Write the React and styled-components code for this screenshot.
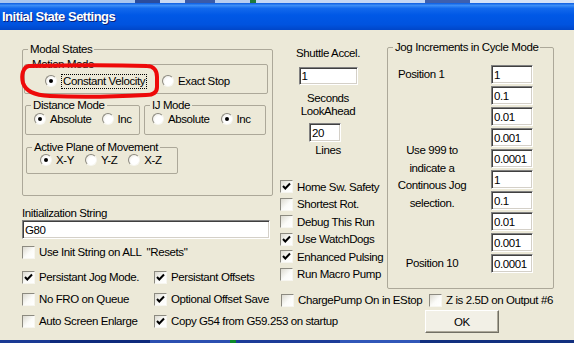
import React from 'react'
import styled, { createGlobalStyle } from 'styled-components'

const GlobalStyle = createGlobalStyle`
  html, body { margin: 0; padding: 0; }
  body {
    width: 574px;
    height: 343px;
    overflow: hidden;
    background: #ece9d8;
    font-family: "Liberation Sans", Arial, sans-serif;
    font-size: 11.5px;
    letter-spacing: -0.4px;
    color: #000;
  }
`

const Window = styled.div`
  position: relative;
  width: 574px;
  height: 343px;
  display: flex;
  flex-direction: column;
  overflow: hidden;
`
const TopStrip = styled.div`
  height: 3px;
  background: linear-gradient(90deg, #a9c6ef 0 135px, #2b4c9c 135px 160px, #c9d9f3 160px 185px, #3a5aa8 185px 215px, #b7cdf0 215px 250px, #1f7a3a 250px 256px, #c5d8f5 256px 425px, #3d5fae 425px 470px, #d5e2f7 470px);
`
const TitleBar = styled.div`
  height: 27px;
  display: flex;
  align-items: center;
  padding-left: 2px;
  background: linear-gradient(180deg, #0b5be0 0%, #3c8ef6 9%, #1269ec 20%, #0058e6 45%, #0053df 80%, #0046c8 100%);
  color: #fff;
  font-weight: bold;
  font-size: 13px;
  letter-spacing: -0.5px;
  text-shadow: 1px 1px 0 #0a1f78;
`
const BottomStrip = styled.div`
  height: 3px;
  background: linear-gradient(90deg, #1a3a94 0 50px, #0f2a7c 50px 150px, #2b4fb0 150px 230px, #0d8a2a 230px 236px, #1c3c98 236px 340px, #3157b8 340px 420px, #12307f 420px);
`
const Body = styled.div`
  flex: 1;
  display: flex;
  padding: 10px 0 0 22px;
  background: #ece9d8;
`
const LeftCol = styled.div`
  width: 251px;
  padding-top: 2px;
  display: flex;
  flex-direction: column;
`
const RightPart = styled.div`
  margin-left: 8px;
  width: 273px;
  display: flex;
  flex-direction: column;
`
const TopRow = styled.div`
  display: flex;
  gap: 12px;
`
const Group = styled.fieldset`
  box-sizing: border-box;
  margin: ${p => p.$m || '0'};
  padding: 0;
  border: 1px solid #aca899;
  border-radius: 2px;
  min-inline-size: 0;
  width: ${p => p.$w}px;
  height: ${p => p.$h}px;
`
const Legend = styled.legend`
  margin-left: 5px;
  padding: 0 2px;
  line-height: 14px;
`
const GroupPair = styled.div`
  display: flex;
  margin: 4px 0 0 2px;
  gap: 4px;
`
const RadioRow = styled.div`
  display: flex;
  align-items: center;
  height: ${p => p.$h}px;
  padding-left: ${p => p.$pl}px;
  gap: ${p => p.$gap}px;
`
const Option = styled.label`
  display: flex;
  align-items: center;
  gap: 4px;
  white-space: nowrap;
`
const RadioBox = styled.span`
  box-sizing: border-box;
  width: 12px;
  height: 12px;
  flex: none;
  border-radius: 50%;
  border: 1px solid;
  border-color: #8c8a80 #f7f6f0 #f7f6f0 #8c8a80;
  background: radial-gradient(circle at 65% 65%, #ffffff 45%, #e4e2d8 100%);
  display: flex;
  align-items: center;
  justify-content: center;
  &::after {
    content: '';
    width: 4px;
    height: 4px;
    border-radius: 50%;
    background: ${p => (p.$on ? '#000' : 'transparent')};
  }
`
const Focus = styled.span`
  padding: 0 1px;
  border: 1px dotted #000;
  line-height: 13px;
`
const CheckBox = styled.span`
  box-sizing: border-box;
  width: 13px;
  height: 13px;
  flex: none;
  border: 1px solid;
  border-color: #8c8a80 #f7f6f0 #f7f6f0 #8c8a80;
  background: linear-gradient(135deg, #dcdad0 0%, #fbfbf8 55%, #ffffff 100%);
  display: flex;
  align-items: center;
  justify-content: center;
`
const CheckItem = styled.label`
  display: flex;
  align-items: center;
  gap: 4px;
  height: ${p => p.$h || 16}px;
  width: ${p => (p.$w ? `${p.$w}px` : 'auto')};
  white-space: pre;
  flex: none;
`
const Text = styled.div`
  line-height: ${p => p.$lh || 14}px;
  margin-top: ${p => p.$mt || 0}px;
  text-align: ${p => p.$align || 'left'};
  padding-left: ${p => p.$pl || 0}px;
  padding-right: ${p => p.$pr || 0}px;
`
const Field = styled.input`
  box-sizing: border-box;
  display: block;
  width: ${p => p.$w}px;
  height: ${p => p.$h || 19}px;
  margin: ${p => p.$m || '0'};
  padding: 0 2px;
  border: 1px solid;
  border-color: #808080 #ffffff #ffffff #808080;
  box-shadow: inset 1px 1px 0 #404040, inset -1px -1px 0 #d4d0c8;
  background: #fff;
  font: inherit;
  letter-spacing: inherit;
  color: #000;
  outline: none;
`
const OptionGrid = styled.div`
  display: grid;
  grid-template-columns: 132px auto;
  grid-auto-rows: 22px;
  margin-top: 6px;
  align-items: center;
`
const MiddleCol = styled.div`
  width: 94px;
  padding-top: 6px;
  display: flex;
  flex-direction: column;
  align-items: center;
`
const CheckList = styled.div`
  align-self: stretch;
  margin: 21px 0 0 -1px;
  display: flex;
  flex-direction: column;
`
const JogBody = styled.div`
  display: flex;
  height: 233px;
`
const JogLabels = styled.div`
  width: 103px;
  display: flex;
  flex-direction: column;
  padding: 11px 0 14px;
  box-sizing: border-box;
`
const Note = styled.div`
  margin-top: 58px;
  padding-right: 15px;
  text-align: center;
  line-height: 17.7px;
`
const JogInputs = styled.div`
  display: flex;
  flex-direction: column;
  gap: 2px;
  padding-top: 11px;
`
const BottomRow = styled.div`
  display: flex;
  margin-top: 3px;
`
const OkButton = styled.button`
  box-sizing: border-box;
  width: 74px;
  height: 23px;
  margin: 2px 0 0 144px;
  border: 1px solid;
  border-color: #ffffff #716f64 #716f64 #ffffff;
  box-shadow: inset -1px -1px 0 #aca899;
  background: #f2f0e6;
  font: inherit;
  letter-spacing: inherit;
  color: #000;
  padding: 0;
`
const Mark = styled.svg`
  position: absolute;
  left: 20px;
  top: 63px;
  pointer-events: none;
`

function Radio({ on, children }) {
  return (
    <Option>
      <RadioBox $on={on} />
      {children}
    </Option>
  )
}

function Check({ on, children, h, w }) {
  return (
    <CheckItem $h={h} $w={w}>
      <CheckBox>
        {on && (
          <svg width="9" height="9" viewBox="0 0 9 9">
            <polyline points="1,4 3.3,6.5 8,1.5" fill="none" stroke="#000" strokeWidth="2" />
          </svg>
        )}
      </CheckBox>
      {children}
    </CheckItem>
  )
}

const jogValues = ['1', '0.1', '0.01', '0.001', '0.0001', '1', '0.1', '0.01', '0.001', '0.0001']

const middleChecks = [
  ['Home Sw. Safety', true],
  ['Shortest Rot.', false],
  ['Debug This Run', false],
  ['Use WatchDogs', true],
  ['Enhanced Pulsing', true],
  ['Run Macro Pump', false],
]

export default function App() {
  return (
    <Window>
      <GlobalStyle />
      <TopStrip />
      <TitleBar>Initial State Settings</TitleBar>
      <Body>
        <LeftCol>
          <Group $w={251} $h={154}>
            <Legend>Modal States</Legend>
            <Group $w={244} $h={37} $m="1px 0 0 1px">
              <Legend>Motion Mode</Legend>
              <RadioRow $h={20} $pl={20} $gap={15}>
                <Radio on><Focus>Constant Velocity</Focus></Radio>
                <Radio>Exact Stop</Radio>
              </RadioRow>
            </Group>
            <GroupPair>
              <Group $w={115} $h={37}>
                <Legend>Distance Mode</Legend>
                <RadioRow $h={14} $pl={8} $gap={10}>
                  <Radio on>Absolute</Radio>
                  <Radio>Inc</Radio>
                </RadioRow>
              </Group>
              <Group $w={122} $h={37}>
                <Legend>IJ Mode</Legend>
                <RadioRow $h={14} $pl={7} $gap={11}>
                  <Radio>Absolute</Radio>
                  <Radio on>Inc</Radio>
                </RadioRow>
              </Group>
            </GroupPair>
            <Group $w={152} $h={34} $m="5px 0 0 3px">
              <Legend>Active Plane of Movement</Legend>
              <RadioRow $h={12} $pl={13} $gap={11}>
                <Radio on>X-Y</Radio>
                <Radio>Y-Z</Radio>
                <Radio>X-Z</Radio>
              </RadioRow>
            </Group>
          </Group>
          <Text $mt={10}>Initialization String</Text>
          <Field $w={248} defaultValue="G80" readOnly />
          <div style={{ marginTop: 5 }}>
            <Check>{'Use Init String on ALL  "Resets"'}</Check>
          </div>
          <OptionGrid>
            <Check on>Persistant Jog Mode.</Check>
            <Check on>Persistant Offsets</Check>
            <Check>No FRO on Queue</Check>
            <Check on>Optional Offset Save</Check>
            <Check>Auto Screen Enlarge</Check>
            <Check on>Copy G54 from G59.253 on startup</Check>
          </OptionGrid>
        </LeftCol>
        <RightPart>
          <TopRow>
            <MiddleCol>
              <Text>Shuttle Accel.</Text>
              <Field $w={59} $h={18} $m="7px 0 0 0" defaultValue="1" readOnly />
              <Text $mt={7} $lh={13} $align="center">Seconds<br />LookAhead</Text>
              <Field $w={32} $m="5px 0 0 -6px" defaultValue="20" readOnly />
              <Text $mt={2} $lh={13}>Lines</Text>
              <CheckList>
                {middleChecks.map(([label, on]) => (
                  <Check key={label} on={on} h={17.5}>{label}</Check>
                ))}
              </CheckList>
            </MiddleCol>
            <Group $w={167} $h={249}>
              <Legend>Jog Increments in Cycle Mode</Legend>
              <JogBody>
                <JogLabels>
                  <Text $lh={19} $pl={10}>Position 1</Text>
                  <Note>Use 999 to<br />indicate a<br />Continous Jog<br />selection.</Note>
                  <Text $lh={19} $pr={15} $align="center" style={{ marginTop: 'auto' }}>Position 10</Text>
                </JogLabels>
                <JogInputs>
                  {jogValues.map((v, i) => (
                    <Field key={i} $w={42} defaultValue={v} readOnly />
                  ))}
                </JogInputs>
              </JogBody>
            </Group>
          </TopRow>
          <BottomRow>
            <Check w={148}>ChargePump On in EStop</Check>
            <Check>Z is 2.5D on Output #6</Check>
          </BottomRow>
          <OkButton>OK</OkButton>
        </RightPart>
      </Body>
      <BottomStrip />
      <Mark width="140" height="36" viewBox="0 0 140 36">
        <path
          d="M9 3 C50 2 100 2 127 3 C134 3 137 8 137 14 L137 24 C137 30 133 32 126 32 C90 34 52 34 30 33 C13 32 6 28 3 20 C1 12 3 4 9 3 Z"
          fill="none"
          stroke="#ee0a0a"
          strokeWidth="4"
        />
      </Mark>
    </Window>
  )
}
